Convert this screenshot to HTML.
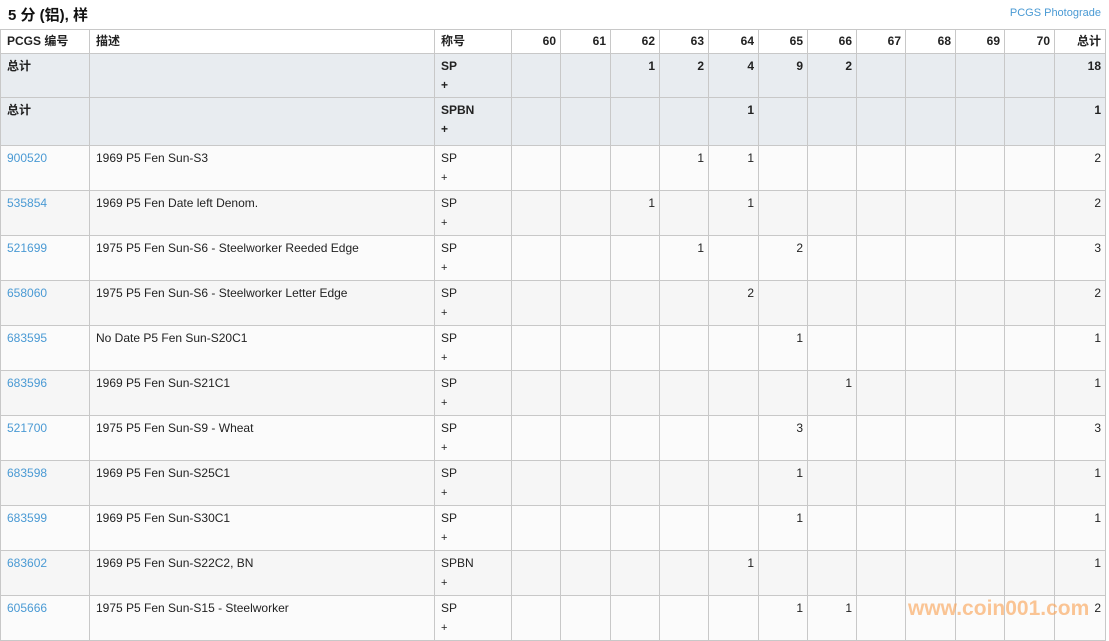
<!DOCTYPE html>
<html><head><meta charset="utf-8"><style>
body{margin:0;background:#fff;font-family:"Liberation Sans","Noto Sans CJK SC",sans-serif;font-size:12px;color:#222;width:1109px;height:638px;overflow:hidden;position:relative}
.t{position:absolute;left:8px;top:4px;font-size:15px;font-weight:bold;color:#111}
.pg{position:absolute;right:8px;top:7px;font-size:11px;color:#4a9ad4}
table{position:absolute;left:0;top:29px;border-collapse:collapse;table-layout:fixed;width:1105px}
td,th{border:1px solid #c8c8c8;vertical-align:top;padding:3px 5px 0 6px;line-height:19px;overflow:hidden;white-space:nowrap}
th{font-weight:bold;text-align:left;height:22px;padding-top:2px;background:#fff;box-sizing:border-box}
th.n,td.n{text-align:right;padding-right:4px}
tr.tot td{background:#e8ecf0;font-weight:bold}
tr.tot td{height:40px}
tr.tot.b td{height:44px}
tr.d td{height:41px}
tr.d:nth-child(odd) td{background:#f6f6f6}
tr.d:nth-child(even) td{background:#fbfbfb}
a{color:#4a9ad4;text-decoration:none}
.p{font-size:11px}
.wm{position:absolute;left:908px;top:597px;font-size:21px;font-weight:bold;color:rgba(250,160,80,0.6);letter-spacing:0}
</style></head><body>
<div class="t">5 分 (铝), 样</div>
<div class="pg">PCGS Photograde</div>
<table>
<colgroup><col style="width:89px"><col style="width:345px"><col style="width:77px">
<col style="width:49px"><col style="width:50px"><col style="width:49px"><col style="width:49px"><col style="width:50px"><col style="width:49px"><col style="width:49px"><col style="width:49px"><col style="width:50px"><col style="width:49px"><col style="width:50px"><col style="width:51px"></colgroup>
<tr style="height:24px"><th>PCGS 编号</th><th>描述</th><th>称号</th><th class="n">60</th><th class="n">61</th><th class="n">62</th><th class="n">63</th><th class="n">64</th><th class="n">65</th><th class="n">66</th><th class="n">67</th><th class="n">68</th><th class="n">69</th><th class="n">70</th><th class="n">总计</th></tr>
<tr class="tot"><td>总计</td><td></td><td>SP<br>+</td><td></td><td></td><td class="n">1</td><td class="n">2</td><td class="n">4</td><td class="n">9</td><td class="n">2</td><td></td><td></td><td></td><td></td><td class="n">18</td></tr>
<tr class="tot b"><td>总计</td><td></td><td>SPBN<br>+</td><td></td><td></td><td></td><td></td><td class="n">1</td><td></td><td></td><td></td><td></td><td></td><td></td><td class="n">1</td></tr>
<tr class="d"><td><a>900520</a></td><td>1969 P5 Fen Sun-S3</td><td>SP<br><span class="p">+</span></td><td></td><td></td><td></td><td class="n">1</td><td class="n">1</td><td></td><td></td><td></td><td></td><td></td><td></td><td class="n">2</td></tr>
<tr class="d"><td><a>535854</a></td><td>1969 P5 Fen Date left Denom.</td><td>SP<br><span class="p">+</span></td><td></td><td></td><td class="n">1</td><td></td><td class="n">1</td><td></td><td></td><td></td><td></td><td></td><td></td><td class="n">2</td></tr>
<tr class="d"><td><a>521699</a></td><td>1975 P5 Fen Sun-S6 - Steelworker Reeded Edge</td><td>SP<br><span class="p">+</span></td><td></td><td></td><td></td><td class="n">1</td><td></td><td class="n">2</td><td></td><td></td><td></td><td></td><td></td><td class="n">3</td></tr>
<tr class="d"><td><a>658060</a></td><td>1975 P5 Fen Sun-S6 - Steelworker Letter Edge</td><td>SP<br><span class="p">+</span></td><td></td><td></td><td></td><td></td><td class="n">2</td><td></td><td></td><td></td><td></td><td></td><td></td><td class="n">2</td></tr>
<tr class="d"><td><a>683595</a></td><td>No Date P5 Fen Sun-S20C1</td><td>SP<br><span class="p">+</span></td><td></td><td></td><td></td><td></td><td></td><td class="n">1</td><td></td><td></td><td></td><td></td><td></td><td class="n">1</td></tr>
<tr class="d"><td><a>683596</a></td><td>1969 P5 Fen Sun-S21C1</td><td>SP<br><span class="p">+</span></td><td></td><td></td><td></td><td></td><td></td><td></td><td class="n">1</td><td></td><td></td><td></td><td></td><td class="n">1</td></tr>
<tr class="d"><td><a>521700</a></td><td>1975 P5 Fen Sun-S9 - Wheat</td><td>SP<br><span class="p">+</span></td><td></td><td></td><td></td><td></td><td></td><td class="n">3</td><td></td><td></td><td></td><td></td><td></td><td class="n">3</td></tr>
<tr class="d"><td><a>683598</a></td><td>1969 P5 Fen Sun-S25C1</td><td>SP<br><span class="p">+</span></td><td></td><td></td><td></td><td></td><td></td><td class="n">1</td><td></td><td></td><td></td><td></td><td></td><td class="n">1</td></tr>
<tr class="d"><td><a>683599</a></td><td>1969 P5 Fen Sun-S30C1</td><td>SP<br><span class="p">+</span></td><td></td><td></td><td></td><td></td><td></td><td class="n">1</td><td></td><td></td><td></td><td></td><td></td><td class="n">1</td></tr>
<tr class="d"><td><a>683602</a></td><td>1969 P5 Fen Sun-S22C2, BN</td><td>SPBN<br><span class="p">+</span></td><td></td><td></td><td></td><td></td><td class="n">1</td><td></td><td></td><td></td><td></td><td></td><td></td><td class="n">1</td></tr>
<tr class="d"><td><a>605666</a></td><td>1975 P5 Fen Sun-S15 - Steelworker</td><td>SP<br><span class="p">+</span></td><td></td><td></td><td></td><td></td><td></td><td class="n">1</td><td class="n">1</td><td></td><td></td><td></td><td></td><td class="n">2</td></tr>
</table>
<div class="wm">www.coin001.com</div>
</body></html>
